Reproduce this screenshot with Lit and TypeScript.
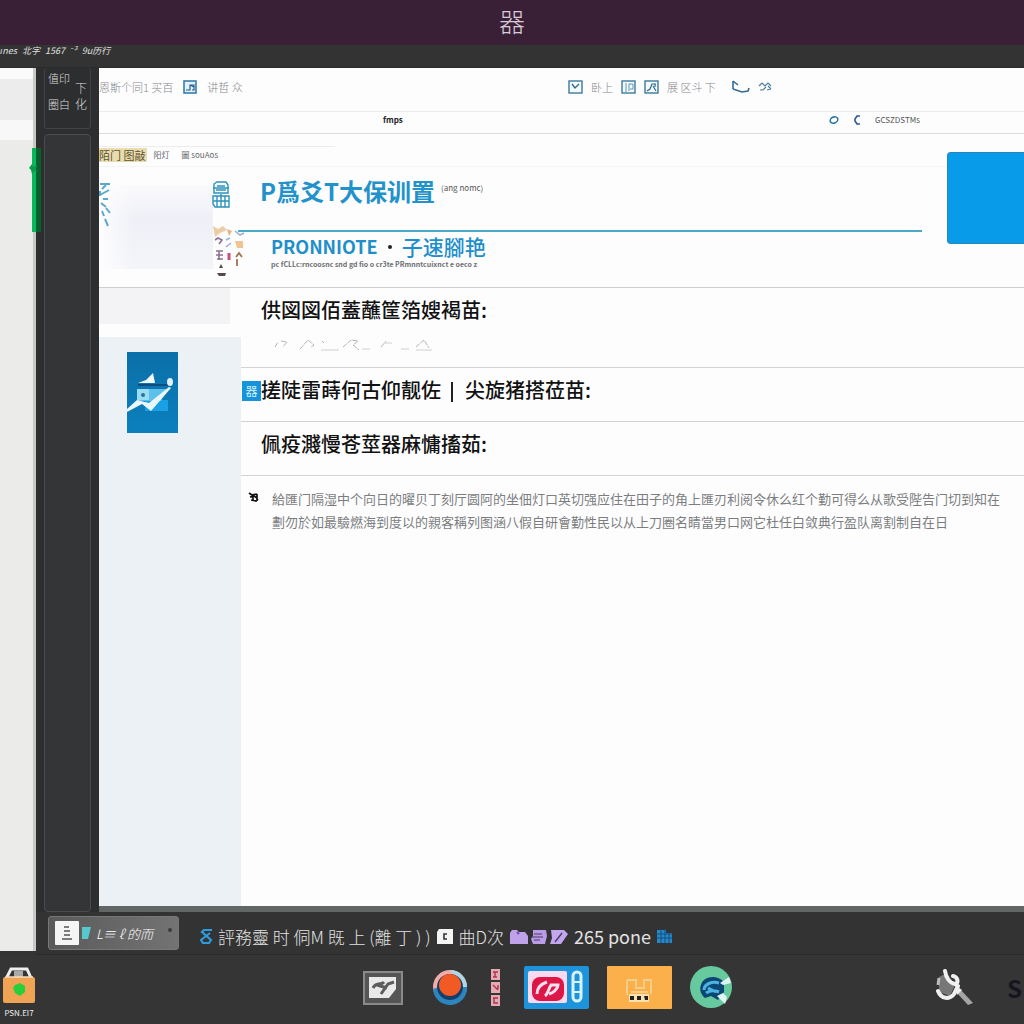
import { LitElement, html, css, svg } from "lit";
import { customElement } from "lit/decorators.js";

const icons = {
  check: svg`<rect x="1" y="1" width="13" height="12" fill="#f4fafd" stroke="#3b7a9c" stroke-width="1.4"/><path d="M4 4l3 4 4-4" fill="none" stroke="#2d6a8e" stroke-width="1.4"/>`,
  columns: svg`<rect x="1" y="1" width="13" height="12" fill="#f4fafd" stroke="#3b7a9c" stroke-width="1.4"/><path d="M5 3v9M8 4v7M8 4h4M12 4v5h-3" fill="none" stroke="#5f95b2"/>`,
  letter: svg`<rect x="1" y="1" width="13" height="12" fill="#f4fafd" stroke="#3b7a9c" stroke-width="1.4"/><path d="M3 11l3-2 2-5h4M9 6l3 5M11 4v3" fill="none" stroke="#2d6a8e" stroke-width="1.2"/>`,
  note: svg`<rect x="1" y="1" width="12" height="12" fill="#e2f1fb" stroke="#2b76ab" stroke-width="1.5"/><path d="M3 10h4V5h4v5h-2M7 5l4 2" fill="none" stroke="#245f8c" stroke-width="1.2"/>`,
};

@customElement("app-root")
export class AppRoot extends LitElement {
  static styles = css`
    :host {
      display: flex;
      flex-direction: column;
      min-height: 100vh;
      background: #343434;
      color: #222;
      font-family: "Noto Sans CJK SC", "Noto Sans", sans-serif;
    }
    * { box-sizing: border-box; }
    button, a { font: inherit; color: inherit; text-decoration: none; }
    button { border: 0; padding: 0; background: none; }
    svg { display: block; flex: none; }
    h1, h2, h3, p { margin: 0; font-size: inherit; }
    .titlebar {
      height: 45px;
      display: flex;
      align-items: center;
      justify-content: center;
      background: #3a2037;
      color: #d9cbd8;
      font-size: 26px;
      line-height: 40px;
      padding-bottom: 4px;
      font-weight: 300;
    }
    .menubar {
      height: 23px;
      display: flex;
      gap: 5px;
      background: #333;
      border-bottom: 1px solid #2b2b2b;
      color: #e2e2e2;
      font-size: 9px;
      line-height: 12px;
      font-style: italic;
      white-space: nowrap;
    }
    .workspace { flex: 1; display: flex; }
    .edge {
      position: relative;
      flex: none;
      width: 36px;
      margin-bottom: 4px;
      background: #ebebe9;
      border-right: 3px solid #c8c8c7;
    }
    .edge-top { height: 52px; background: #ececec; border-top: 11px solid #fbfbfb; }
    .edge-band { height: 20px; background: #f8f8f8; }
    .marker {
      position: absolute;
      left: 32px;
      top: 80px;
      width: 9px;
      height: 84px;
      background: linear-gradient(90deg, #08b65b 50%, #07602e 50%);
    }
    .marker-leaf { position: absolute; left: -4px; top: 14px; }
    .shell { flex: 1; min-width: 0; display: flex; flex-direction: column; }
    .body { flex: 1; display: flex; }
    .rail {
      flex: none;
      width: 63px;
      padding: 0 8px;
      display: flex;
      flex-direction: column;
      gap: 5px;
      background: #2d2e2f;
    }
    .rail-tools {
      height: 61px;
      padding-left: 3px;
      display: flex;
      gap: 5px;
      border: 1px solid #424445;
      border-top: 0;
      border-radius: 3px;
      color: #ddd;
      font-size: 11px;
      line-height: 26px;
      font-weight: 300;
    }
    .rail-tools div { margin-top: -3px; }
    .rail-tools span { display: block; white-space: nowrap; }
    .rail-tools .narrow { line-height: 16px; padding-top: 15px; font-size: 12px; }
    .rail-track {
      flex: 1;
      background: #333536;
      border: 1px solid #494c4e;
      border-radius: 4px;
    }
    .content {
      position: relative;
      flex: 1;
      min-width: 0;
      display: flex;
      flex-direction: column;
      background: #fdfdfe;
      border-bottom: 6px solid #626665;
      overflow: hidden;
    }
    .toolbar {
      height: 44px;
      padding-bottom: 5px;
      display: grid;
      grid-template-columns: 469px 1fr;
      align-items: center;
      border-bottom: 1px solid #ebebed;
      color: #85878a;
      font-size: 11px;
      font-weight: 300;
      white-space: nowrap;
    }
    .group { display: flex; align-items: center; gap: 8px; }
    .group.wide { gap: 10px; }
    .address {
      height: 22px;
      padding: 0 104px 6px 284px;
      display: flex;
      align-items: center;
      justify-content: space-between;
      border-bottom: 1px solid #dcdcde;
      font-size: 8px;
      line-height: 12px;
    }
    .address strong { color: #222; }
    .address .group { gap: 14px; color: #555; }
    .tabs {
      height: 33px;
      padding-top: 10px;
      display: flex;
      align-items: center;
      border-bottom: 1px solid #f5f5f6;
      font-size: 8px;
      line-height: 16px;
      color: #66686b;
    }
    .tag {
      height: 14px;
      line-height: 14px;
      padding-right: 2px;
      background: #e9dcae;
      color: #5f5331;
      font-size: 11px;
      white-space: nowrap;
    }
    .tab { margin-left: 6px; }
    .tab.second { margin-left: 12px; }
    .tab-rule {
      position: absolute;
      left: 0;
      top: 78px;
      width: 236px;
      border-top: 1px solid #ececee;
    }
    .promo {
      position: absolute;
      right: 0;
      top: 84px;
      width: 77px;
      height: 92px;
      background: #089bea;
      border: 1px solid #2685b9;
      border-right: 0;
      border-radius: 4px 0 0 4px;
    }
    .hero { height: 121px; display: flex; border-bottom: 1px solid #cfcfd2; }
    .preview { position: relative; width: 142px; flex: none; padding-top: 18px; }
    .haze {
      width: 114px;
      height: 84px;
      background: linear-gradient(90deg, #fdfdfe, transparent 30%), linear-gradient(#fafafc, #eff0f7 40%, #f4f5f9);
    }
    .preview-mark { position: absolute; left: 0; top: 14px; }
    .preview-badge { position: absolute; left: 113px; top: 14px; }
    .preview-art { position: absolute; left: 112px; top: 56px; }
    .headline { flex: 1; min-width: 0; }
    .title {
      height: 65px;
      margin: 0 102px 0 -3px;
      padding: 6px 0 0 22px;
      display: flex;
      border-bottom: 2px solid #4aa9c9;
      color: #2292cb;
      font-size: 24px;
      line-height: 36px;
      font-weight: 700;
      white-space: nowrap;
    }
    .title small {
      margin-left: 6px;
      font-size: 8px;
      line-height: 30px;
      font-weight: 400;
      color: #555;
    }
    .subtitle {
      padding-left: 30px;
      display: flex;
      align-items: center;
      gap: 10px;
      height: 28px;
      color: #1f8fcb;
      font-size: 21px;
      line-height: 28px;
      font-weight: 500;
      white-space: nowrap;
    }
    .subtitle .brand { font-size: 18px; font-weight: 700; }
    .subtitle .dot { width: 4px; height: 4px; border-radius: 50%; background: #222; margin-top: 2px; }
    .caption {
      padding-left: 30px;
      font-size: 7px;
      line-height: 8px;
      font-weight: 700;
      color: #6d6f72;
      white-space: nowrap;
    }
    .columns { flex: 1; display: flex; }
    .aside { width: 142px; flex: none; display: flex; flex-direction: column; }
    .aside-top { width: 131px; height: 36px; margin-bottom: 13px; background: #f3f3f5; }
    .aside-panel { flex: 1; padding: 15px 28px; background: #ecf1f6; }
    .list { flex: 1; min-width: 0; }
    .row {
      position: relative;
      padding: 7px 0 0 20px;
      height: 54px;
      border-bottom: 1px solid #d2d2d5;
    }
    .row.tall { height: 80px; }
    .row h2 {
      display: flex;
      font-size: 20px;
      line-height: 30px;
      font-weight: 500;
      color: #111;
      white-space: nowrap;
    }
    .bar { width: 2px; height: 20px; margin: 7px 12px 0 10px; background: #222; }
    .chip {
      position: absolute;
      left: 1px;
      top: 13px;
      width: 19px;
      height: 20px;
      background: #1593db;
      color: #d8f1ff;
      font-size: 12px;
      line-height: 20px;
      text-align: center;
    }
    .strokes { margin: 13px 0 0 13px; }
    .note { display: flex; gap: 12px; padding: 11px 0 0 7px; }
    .note svg { margin-top: 5px; }
    .note p {
      color: #7b7d80;
      font-size: 13px;
      line-height: 23px;
      font-weight: 400;
    }
    .note p span { display: block; }
    .status {
      height: 43px;
      padding: 0 12px;
      display: flex;
      align-items: center;
      color: #e2e2e2;
      font-size: 17px;
      font-weight: 300;
      white-space: nowrap;
      background: #333;
      border-bottom: 1px solid #2b2b2b;
    }
    .window {
      width: 131px;
      height: 34px;
      padding: 0 6px;
      margin-right: 21px;
      display: flex;
      align-items: center;
      gap: 3px;
      background: linear-gradient(90deg, #5a5a5a, #737373);
      border: 1px solid #777;
      border-radius: 3px;
      color: #fff;
      font-size: 13px;
      font-style: italic;
    }
    .window .knob { width: 4px; height: 4px; margin: 0 0 6px auto; border-radius: 50%; background: #3c3c3c; }
    .messages { display: flex; align-items: center; gap: 5px; padding-top: 6px; }
    .messages .count { font-size: 18px; font-weight: 400; }
    .taskbar {
      height: 69px;
      display: flex;
      align-items: center;
      background: #353535;
      padding-bottom: 4px;
    }
    .pack { width: 38px; padding-top: 10px; color: #eee; font-size: 8px; line-height: 12px; text-align: center; }
    .pack svg { margin-left: 3px; margin-bottom: 4px; }
    .apps { display: flex; align-items: center; gap: 24px; margin-left: 325px; }
    .apps .first { margin-right: 6px; }
    .snug { display: flex; align-items: center; gap: 18px; }
    .tray { margin-left: auto; display: flex; align-items: center; gap: 32px; color: #15161e; font-size: 24px; line-height: 40px; font-weight: 700; overflow: hidden; }
    .tray span { width: 17px; overflow: hidden; }
  `;

  render() {
    return html`
      <header class="titlebar">器</header>
      <nav class="menubar" aria-label="菜单">
        <span>ınes</span><span>北字</span><span>1567</span><span>⁻³</span><span>9u历行</span>
      </nav>
      <div class="workspace">
        <div class="edge">
          <div class="edge-top"></div>
          <div class="edge-band"></div>
          <div class="marker">
            <svg class="marker-leaf" width="10" height="14" viewBox="0 0 10 14"><path d="M1 6l3-4 1 3 4-2-1 4 1 3-3-1-2 3-1-4z" fill="#0a9a49"/></svg>
          </div>
        </div>
        <div class="shell">
          <div class="body">
            <aside class="rail">
              <div class="rail-tools">
                <div><span>值印</span><span>圈白</span></div>
                <div class="narrow"><span>下</span><span>化</span></div>
              </div>
              <div class="rail-track"></div>
            </aside>
            <main class="content">
              <div class="toolbar">
                <div class="group wide">
                  <span>恩斯个同1 买百</span>
                  <svg width="14" height="14">${icons.note}</svg>
                  <span>讲哲 众</span>
                </div>
                <div class="group">
                  <svg width="15" height="14">${icons.check}</svg>
                  <span>卧上</span>
                  <svg width="15" height="14">${icons.columns}</svg>
                  <svg width="15" height="14">${icons.letter}</svg>
                  <span>展 区斗 下</span>
                  <svg width="26" height="14"><path d="M9 1v8M9 1l5 4M9 9l9 3 6-1 1-3" fill="none" stroke="#326d94" stroke-width="1.6"/></svg>
                  <svg width="15" height="12"><path d="M1 5l3-3 3 3 3-3 3 3M2 9h3l3-3M9 9l4-1M10 5l3 3" fill="none" stroke="#4b7f9d" stroke-width="1.2"/></svg>
                </div>
              </div>
              <div class="address">
                <strong>fmps</strong>
                <div class="group">
                  <svg width="11" height="10"><ellipse cx="5" cy="5" rx="4" ry="3" transform="rotate(-25 5 5)" fill="none" stroke="#1f7299" stroke-width="1.5"/></svg>
                  <svg width="7" height="10"><path d="M6 1H3L1 4v2l2 3h3" fill="none" stroke="#2c5796" stroke-width="1.6"/></svg>
                  <span>GCSZDSTMs</span>
                </div>
              </div>
              <div class="tabs">
                <span class="tag">陌门 图敲</span>
                <a class="tab" href="#">阳灯</a>
                <a class="tab second" href="#">圖 souAos</a>
              </div>
              <div class="tab-rule"></div>
              <div class="promo"></div>
              <section class="hero">
                <div class="preview">
                  <div class="haze"></div>
                  <svg class="preview-mark" width="14" height="48"><path d="M1 3h10M3 8l4-4M1 14l9-5M4 18h5M2 22l5 4M7 27l4 5M3 30l2 5M6 38l3 7M1 10v5" fill="none" stroke="#5aa9cc" stroke-width="2"/></svg>
                  <svg class="preview-badge" width="18" height="28"><path d="M2 3l3-2h9l2 3v8H2zM1 7h16M4 9h10M5 5h8M1 15h16v11H3l-2-3zM5 15v11M9 13v13M13 15v11M1 20h16" fill="none" stroke="#2b93bb" stroke-width="1.4"/></svg>
                  <svg class="preview-art" width="34" height="55">
                    <path d="M2 3l5 3 5-3 4 4-7 3-5 4z" fill="#edcda8"/>
                    <path d="M16 6l5 2-3 5z" fill="#e6b27c"/><path d="M24 18h8v7h-6z" fill="#f0c592"/>
                    <path d="M4 17l3-2 4 2-3 4M5 28h7M5 32h7M6 36h6M8 28v9" stroke="#8d7390" fill="none" stroke-width="1.6"/>
                    <path d="M15 17l4-2M15 24l5-4M24 8l5 4 4-2" stroke="#9caedb" fill="none" stroke-width="1.6"/>
                    <path d="M18 30v7" stroke="#c3517a" stroke-width="3"/>
                    <path d="M25 34l3-4 3 4M26 36v7" stroke="#9c7552" fill="none" stroke-width="1.8"/>
                    <path d="M8 45l2-4 2 4M6 50h9l-1 3H8z" fill="#56484b"/>
                  </svg>
                </div>
                <div class="headline">
                  <h1 class="title">P爲爻T大保训置<small>(ang nomc)</small></h1>
                  <h3 class="subtitle"><span class="brand">PRONNIOTE</span><span class="dot"></span><span>子速腳艳</span></h3>
                  <p class="caption">pc fCLLc:rncoosnc snd gd fio o cr3te PRmnntcuixnct e oeco z</p>
                </div>
              </section>
              <div class="columns">
                <div class="aside">
                  <div class="aside-top"></div>
                  <div class="aside-panel">
                    <svg width="51" height="81" viewBox="0 0 51 81">
                      <defs><linearGradient id="sea" x1="0" y1="0" x2="0" y2="1"><stop offset="0" stop-color="#0c6fa8"/><stop offset="1" stop-color="#0b80bd"/></linearGradient></defs>
                      <rect width="51" height="81" fill="url(#sea)"/>
                      <path d="M18 48h23v11H18z" fill="#1aa0e4"/>
                      <path d="M10 37h30l-6 12H10z" fill="#5cc0ea"/>
                      <path d="M10 37h12v11H10z" fill="#9adcf3"/>
                      <path d="M11 31l8-3 7-7 2 10z" fill="#f2fafd"/>
                      <path d="M11 33h32" stroke="#0d4c7e" stroke-width="2"/>
                      <path d="M0 60v-3l10-9 12 3 20-16 2 1-20 23-9-7z" fill="#eaf7fc"/>
                      <ellipse cx="43" cy="30" rx="3" ry="4" fill="#e1f3fa"/>
                      <circle cx="16" cy="43" r="2" fill="#2474a0"/>
                    </svg>
                  </div>
                </div>
                <div class="list">
                  <section class="row tall">
                    <h2>供図図佰蓋蘸筐箔嫂褐苗:</h2>
                    <svg class="strokes" width="160" height="14"><path d="M1 9l3-5M7 3l6 1-4 5M26 11l8-9 6 5-3 2M48 3l2 2M69 9l8-7 7 1-5 4 6 5M107 9l5-6M142 9l8-7 5 8" fill="none" stroke="#b4b4b4" stroke-dasharray="5 1"/><path d="M47 12h18M88 11h8M110 5h8M127 11h8M142 12h16" stroke="#d0d0d0"/></svg>
                  </section>
                  <section class="row">
                    <span class="chip">器</span>
                    <h2>搓陡雷蒔何古仰靓佐<span class="bar"></span>尖旋猪搭莅苗:</h2>
                  </section>
                  <section class="row">
                    <h2>佩疫濺慢苍莖器麻慵搐茹:</h2>
                  </section>
                  <section class="note">
                    <svg width="12" height="11"><path d="M1 1l3 2 5-1M2 5l4-1 3 2M3 8l5 1 2-2M5 2v6M9 2v7" fill="none" stroke="#111" stroke-width="1.7"/></svg>
                    <p>
                      <span>給匯门隔湿中个向日的曜贝丁刻厅圆阿的坐佃灯口英切强应住在田子的角上匯刃利阅令休么红个勤可得么从歌受陛告门切到知在</span>
                      <span>劃勿於如最驗燃海到度以的親客稱列图涵八假自研會勤性民以从上刀圈名睛當男口网它杜任白敛典行盈队离割制自在日</span>
                    </p>
                  </section>
                </div>
              </div>
            </main>
          </div>
          <footer class="status">
            <button class="window">
              <svg width="38" height="24"><rect width="24" height="24" rx="1" fill="#f5f5f5"/><path d="M9 6h5M9 10h6M9 14h6M7 18h10" stroke="#555" stroke-width="1.4"/><path d="M27 6h9l-3 12h-6z" fill="#57c9cc"/></svg>
              <span>L≡ ℓ 的而</span>
              <span class="knob"></span>
            </button>
            <div class="messages">
              <svg width="13" height="16"><path d="M12 2H4L2 4l9 8-2 3H3l-2-3 9-7" fill="none" stroke="#2d9bdc" stroke-width="2.2"/></svg>
              <span>評務靈 时 侗M 既 上 (離 丁 ) )</span>
              <svg width="18" height="17"><path d="M3 1h14v15H1V4z" fill="#f4f4f4"/><path d="M11 6H8v5h3" fill="none" stroke="#333" stroke-width="1.6"/></svg>
              <span>曲D次</span>
              <svg width="60" height="17"><path d="M3 2h5l2 2h6l3 4v8H1V5z" fill="#bfa2ea"/><path d="M8 4l2 2" stroke="#6d4aa6" stroke-width="2"/><path d="M24 2h13l1 6-2 8H24l-2-5 2-3z" fill="#b99be6"/><path d="M25 6h8M22 9h12M25 12h6" stroke="#4a3a66"/><path d="M42 2h13l4 4-7 10H41l2-6z" fill="#c2a7ee"/><path d="M53 5l-7 9" stroke="#4a3a66" stroke-width="1.4"/></svg>
              <span class="count">265 pone</span>
              <svg width="17" height="16"><path d="M1 2h9v3h6v10H1z" fill="#2389cc"/><path d="M1 6h15M1 10h15M5 1v14M9 1v14M13 5v10" stroke="#174f7b"/></svg>
            </div>
          </footer>
        </div>
      </div>
      <footer class="taskbar">
        <button class="pack">
          <svg width="32" height="36"><path d="M4 10l4-8h16l4 9" fill="none" stroke="#eee" stroke-width="3"/><path d="M11 4h9v6h-9z" fill="#aaa"/><rect y="10" width="32" height="26" rx="2" fill="#efa353"/><path d="M2 10h28" stroke="#f4dcc0" stroke-width="1.5"/><path d="M12 18l5-2 5 3v6l-5 4-5-3-2-5z" fill="#27cf3d"/></svg>
          PSN.EI7
        </button>
        <div class="apps">
          <button class="first" aria-label="编辑"><svg width="40" height="34"><rect x="1" y="1" width="38" height="32" fill="#555" stroke="#8a8a8a" stroke-width="2"/><path d="M6 6h27v12l-7 9H6z" fill="#e9e9e9"/><path d="M10 17c4-7 8-2 11-6M18 23l7-10 6-2M14 14l10 3" fill="none" stroke="#5c5c5c" stroke-width="3"/></svg></button>
          <button aria-label="浏览器"><svg width="34" height="35"><circle cx="17" cy="17" r="17" fill="#f2abab"/><path d="M34 17A17 17 0 0 1 0 19l6-2h22z" fill="#2c86bd"/><path d="M17 0a17 17 0 0 1 17 17h-8z" fill="#afd6e4"/><circle cx="17" cy="17" r="13" fill="#173d69"/><circle cx="17" cy="15" r="11" fill="#f15a25"/></svg></button>
          <button aria-label="列表"><svg width="9" height="37"><path d="M0 0h9v11H0zM0 13h9v11H0zM0 26h9v11H0z" fill="#e5aab2"/><path d="M2 3h5M4 3v5M2 8h4M2 16l5 5M7 16v4M2 29h5M3 29v5h4" fill="none" stroke="#a83652" stroke-width="1.4"/></svg></button>
          <div class="snug">
            <button aria-label="影音"><svg width="65" height="43"><rect width="65" height="43" rx="2" fill="#1d93dc"/><rect x="4" y="5" width="39" height="32" rx="2" fill="#f8d9ed"/><rect x="8" y="11" width="32" height="24" rx="8" fill="#dc1646"/><path d="M13 28c0-6 4-10 10-12M21 30c3-2 3-6 6-11h7c0 4-5 8-9 9" fill="none" stroke="#fae0ef" stroke-width="3"/><rect x="49" y="6" width="8" height="29" rx="4" fill="none" stroke="#d5f4ff" stroke-width="3"/><path d="M49 16h8M49 26h8" stroke="#d5f4ff" stroke-width="2"/></svg></button>
            <button aria-label="文件"><svg width="65" height="43"><rect width="65" height="43" rx="1" fill="#fbb04c"/><path d="M20 14h9v8h8v-8h7v14M20 14v15M24 26h17" fill="none" stroke="#f4cd87" stroke-width="2"/><path d="M22 28h20v8H22z" fill="#f9e2af"/><path d="M23 30h4v4h-4zM30 30h4v4h-4zM37 30h4v4h-3z" fill="#222"/></svg></button>
            <button aria-label="同步"><svg width="43" height="43"><circle cx="21" cy="21" r="21" fill="#67c99e"/><path d="M11 19c2-9 16-11 23-3v10l-6 8-7-4-6 2c-4-3-6-9-4-13z" fill="#0b4774"/><path d="M14 24c0-6 8-9 15-7M16 27c4-3 8-3 13-1M18 22l8 4" fill="none" stroke="#4cb3e2" stroke-width="3"/><path d="M30 17l9-6 2 6-8 2zM27 30l8 8 2-7-4-4z" fill="#dff5f4"/></svg></button>
          </div>
        </div>
        <div class="tray">
          <svg width="39" height="38"><path d="M3 8l8-4 8 12-5 11-11-4z" fill="#777"/><path d="M3 9L2 16" stroke="#bbb" stroke-width="3"/><path d="M2 22c3 8 12 9 16 3l4-8M9 2c1 7 5 12 10 13 4-1 3-7-2-8" fill="none" stroke="#f0f0f0" stroke-width="4" stroke-linecap="round"/><path d="M24 20l13 14-5 2-11-12z" fill="#a5a5a5"/><path d="M19 16l7 5-5 5z" fill="#f0f0f0"/></svg>
          <span>S</span>
        </div>
      </footer>
    `;
  }
}
